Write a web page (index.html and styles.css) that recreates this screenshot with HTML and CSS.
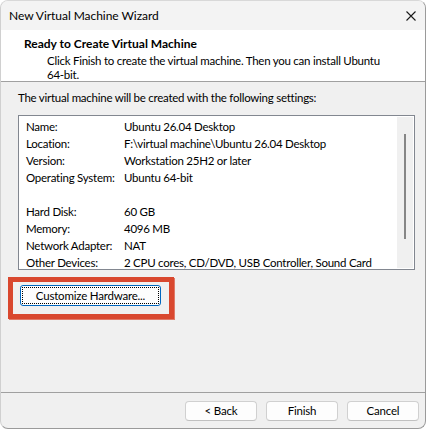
FILE: index.html
```html
<!DOCTYPE html>
<html lang="en">
<head>
    <meta charset="UTF-8">
    <title>New Virtual Machine Wizard</title>
    <link rel="stylesheet" href="styles.css">
</head>
<body>
    <div class="window">
        <div class="titlebar">
            <span class="title">New Virtual Machine Wizard</span>
            <svg class="close" width="10" height="10" viewBox="0 0 10 10">
                <path d="M0.5 0.5 L9.5 9.5 M9.5 0.5 L0.5 9.5" stroke="#1a1a1a" stroke-width="1.1" fill="none"/>
            </svg>
        </div>

        <div class="header">
            <h1>Ready to Create Virtual Machine</h1>
            <p>Click Finish to create the virtual machine. Then you can install Ubuntu 64-bit.</p>
        </div>

        <div class="content">
            <p class="intro">The virtual machine will be created with the following settings:</p>

            <div class="listbox">
                <div class="settings">
                    <span>Name:</span><span>Ubuntu 26.04 Desktop</span>
                    <span>Location:</span><span>F:\virtual machine\Ubuntu 26.04 Desktop</span>
                    <span>Version:</span><span>Workstation 25H2 or later</span>
                    <span>Operating System:</span><span>Ubuntu 64-bit</span>
                    <span class="blank"></span><span class="blank"></span>
                    <span>Hard Disk:</span><span>60 GB</span>
                    <span>Memory:</span><span>4096 MB</span>
                    <span>Network Adapter:</span><span>NAT</span>
                    <span>Other Devices:</span><span>2 CPU cores, CD/DVD, USB Controller, Sound Card</span>
                </div>
                <div class="scrollbar">
                    <div class="thumb"></div>
                </div>
            </div>

            <div class="highlight">
                <button class="btn focused"><span>Customize Hardware...</span></button>
            </div>
        </div>

        <div class="footer">
            <button class="btn">&lt; Back</button>
            <button class="btn">Finish</button>
            <button class="btn">Cancel</button>
        </div>
    </div>
</body>
</html>
```

FILE: styles.css
```css
body {
    margin: 0;
    background: #ffffff;
    font-family: Lato, "Noto Sans", sans-serif;
    font-size: 11.5px;
    letter-spacing: -0.25px;
    color: #000;
}

.window {
    width: 426px;
    height: 429px;
    box-sizing: border-box;
    background: #f0f0f0;
    border: 1px solid #9a9a9a;
    border-top-color: #d8d8d8;
    border-left-color: #d0d0d0;
    border-radius: 8px;
    display: flex;
    flex-direction: column;
    overflow: hidden;
}

.titlebar {
    height: 29px;
    display: flex;
    align-items: center;
    justify-content: space-between;
    padding: 0 9px 0 8px;
    background: #f3f3f3;
}

.title {
    font-size: 12px;
    letter-spacing: -0.05px;
}

.header {
    background: #fff;
    border-bottom: 1px solid #a0a0a0;
    padding: 6px 0 0 23px;
    box-sizing: border-box;
    height: 52px;
}

.header h1 {
    margin: 0;
    font-size: 12px;
    font-weight: bold;
    letter-spacing: 0;
    line-height: 16px;
}

.header p {
    margin: 2px 0 0 23px;
    width: 340px;
    line-height: 14px;
}

.content {
    flex: 1;
    padding: 0 0 0 17px;
    border-bottom: 1px solid #a0a0a0;
}

.intro {
    margin: 8px 0 0 0;
    line-height: 16px;
}

.listbox {
    margin-top: 9px;
    width: 397px;
    height: 155px;
    box-sizing: border-box;
    border: 1px solid #828790;
    background: #fff;
    display: flex;
}

.settings {
    flex: 1;
    display: grid;
    grid-template-columns: 98px 1fr;
    grid-auto-rows: 17px;
    align-items: center;
    padding: 2px 0 0 7px;
    white-space: nowrap;
}

.scrollbar {
    width: 16px;
    margin: 1px 1px 1px 0;
    background: #f0f0f0;
    display: flex;
    justify-content: center;
    padding-top: 17px;
    box-sizing: border-box;
}

.thumb {
    width: 2px;
    height: 105px;
    background: #868686;
}

.highlight {
    margin: 7px 0 0 -10px;
    width: 166px;
    height: 42px;
    box-sizing: border-box;
    border: 5px solid #d9482f;
    padding: 3px 0 0 7px;
    box-shadow: 1px 1px 0 #e07a68;
}

.btn {
    font-family: inherit;
    font-size: 11.5px;
    letter-spacing: -0.2px;
    color: #000;
    background: #fdfdfd;
    border: 1px solid #d0d0d0;
    border-bottom-color: #c0c0c0;
    border-radius: 4px;
    width: 72px;
    height: 20px;
    padding: 0;
    line-height: 16px;
}

.btn.focused {
    width: 141px;
    height: 21px;
    border: 1px solid #0067c0;
    border-radius: 3px;
    padding: 1px;
}

.btn.focused span {
    display: block;
    height: 100%;
    box-sizing: border-box;
    border: 1px dotted #000;
    line-height: 15px;
}

.footer {
    height: 35px;
    display: flex;
    justify-content: flex-end;
    align-items: flex-start;
    gap: 9px;
    padding: 8px 6px 0 0;
    box-sizing: border-box;
}
```
